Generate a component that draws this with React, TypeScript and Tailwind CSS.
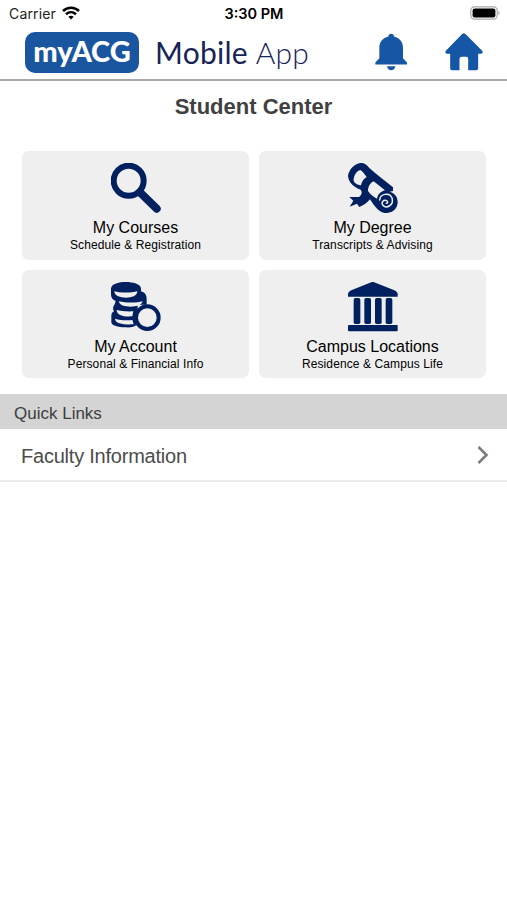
// App.tsx

import React from "react";

const SearchIcon: React.FC = () => (
  <svg viewBox="32 24 150 150" className="h-[50px] w-[50px]" fill="none" stroke="#00205f">
    <circle cx="85" cy="77" r="45" strokeWidth="18" />
    <path d="M119 112L169 161" strokeWidth="24" strokeLinecap="round" />
  </svg>
);

const DegreeIcon: React.FC = () => (
  <svg viewBox="32 24 150 150" className="h-[50px] w-[50px]">
    <path
      d="M32 63C34 46 50 26 70 24C80 23 88 29 96 39L116 56L167 97V108L157 110C175 116 181 127 181 142C180 160 168 173 149 174C131 174 119 163 107 146L98 133C91 142 78 152 66 156L59 146L37 155L48 137L36 126H65C76 117 75 107 67 103C51 96 34 85 32 63Z"
      fill="#00205f"
    />
    <path d="M49 77C48 64 58 46 69 45C76 49 82 59 88 66C79 71 73 80 71 91C62 89 52 86 49 77Z" fill="#efefef" />
    <path d="M92 108C92 95 98 84 109 79L143 106C130 110 122 117 119 131C109 126 99 119 92 108Z" fill="#efefef" />
    <path
      d="M127 135C128 116 157 111 164 129C171 150 147 163 136 150C131 141 139 133 148 137C153 139 151 145 147 145"
      fill="none"
      stroke="#efefef"
      strokeWidth="4.5"
      strokeLinecap="round"
    />
  </svg>
);

const CoinsIcon: React.FC = () => (
  <svg viewBox="32 24 150 150" className="h-[50px] w-[50px]">
    <path
      d="M32 43C34 29 57 24 76 24C98 24 121 30 122 43V52C133 55 139 62 139 74V92H112V150C103 159 91 161 75 160C54 160 33 155 33 145V126C33 119 36 115 41 112C36 105 38 98 43 91L46 81C38 78 32 71 32 62Z"
      fill="#00205f"
    />
    <path d="M42 52C57 57 94 57 111 52C111 66 94 71 77 71C60 71 42 66 42 52Z" fill="#efefef" />
    <path d="M56 82C75 87 109 87 127 82C124 94 108 98 91 98C74 98 56 94 56 82Z" fill="#efefef" />
    <path d="M49 108C60 111 79 113 99 112L96 127C73 129 49 125 49 108Z" fill="#efefef" />
    <path d="M44 134C60 139 78 140 96 138L100 151C73 153 44 149 44 134Z" fill="#efefef" />
    <circle cx="141" cy="131" r="34" fill="#efefef" stroke="#00205f" strokeWidth="12" />
  </svg>
);

const CampusIcon: React.FC = () => (
  <svg viewBox="32 24 150 150" className="h-[50px] w-[50px]" fill="#00205f">
    <path d="M106 23L171 49C177 52 181 55 181 61V68H32V61C32 55 36 52 42 49Z" />
    <rect x="49" y="72" width="20" height="78" rx="5" />
    <rect x="81" y="72" width="20" height="78" rx="5" />
    <rect x="113" y="72" width="20" height="78" rx="5" />
    <rect x="145" y="72" width="20" height="78" rx="5" />
    <rect x="32" y="153" width="149" height="19" rx="3" />
  </svg>
);

const cards = [
  { title: "My Courses", subtitle: "Schedule & Registration", icon: <SearchIcon /> },
  { title: "My Degree", subtitle: "Transcripts & Advising", icon: <DegreeIcon /> },
  { title: "My Account", subtitle: "Personal & Financial Info", icon: <CoinsIcon /> },
  { title: "Campus Locations", subtitle: "Residence & Campus Life", icon: <CampusIcon /> },
];

const StatusBar: React.FC = () => (
  <div className="grid h-7 grid-cols-3 items-center pb-[2px] pl-[9px] pr-[7px] font-['Inter',sans-serif] text-black">
    <div className="flex items-center gap-[6px] text-[14px] tracking-[0.15px]">
      <span className="text-[#222]">Carrier</span>
      <svg viewBox="0 0 18 14" className="h-[14px] w-[18px]" fill="none" stroke="#000" strokeWidth="2.5">
        <path d="M1 5C5.5 .7 12.5 .7 17 5" />
        <path d="M4 8.3C7 5.6 11 5.6 14 8.3" />
        <path d="M6.3 10.8C8 9.3 10 9.3 11.7 10.8L9 13.6Z" fill="#000" stroke="none" />
      </svg>
    </div>
    <span className="-ml-px pt-[2px] text-center text-[14.5px] font-semibold">3:30 PM</span>
    <svg viewBox="0 0 30 14" className="h-[14px] w-[30px] justify-self-end">
      <rect x=".8" y=".8" width="26.4" height="12.4" rx="3.6" fill="#fff" stroke="#aaa" strokeWidth="1.2" />
      <rect x="2.6" y="2.4" width="22.8" height="9.2" rx="2" fill="#000" />
      <path d="M28.4 4.8Q31 7 28.4 9.2Z" fill="#aaa" />
    </svg>
  </div>
);

const Header: React.FC = () => (
  <header className="flex h-[53px] items-start border-b-2 border-[#aaa7a7] pl-[25px] pr-6 pt-[3.5px]">
    <div className="flex h-[41px] w-[114px] items-center justify-center rounded-[10px] bg-[#1a559f] pb-[3px] font-['Lato',sans-serif] text-[29px] font-black leading-none text-white">
      myACG
    </div>
    <div className="ml-4 mt-[2px] whitespace-nowrap font-['Lato',sans-serif] text-[30px] leading-[36px] tracking-[0.25px] text-[#172457]">
      Mobile <span className="font-light">App</span>
    </div>
    <div className="ml-auto flex gap-[38px] pt-[1.5px]">
      <svg viewBox="365 99 96 113" className="h-[38px] w-8" fill="#1557a5">
        <path d="M405 109C405 98 422 98 422 109C439 113 449 126 449 143V174L461 187V193H366V187L378 174V143C378 126 388 113 405 109Z" />
        <path d="M401 198H426C424 214 403 214 401 198Z" />
      </svg>
      <svg viewBox="577 98 113 114" className="h-[38px] w-[38px]" fill="#1557a5">
        <path d="M628 101Q633 96 638 101L688 151Q692 158 686 160H676V204Q676 210 670 210H646V175Q646 169 640 169H627Q620 169 620 175V210H597Q592 210 592 204V160H582Q575 158 579 151Z" />
      </svg>
    </div>
  </header>
);

const App: React.FC = () => {
  return (
    <div className="min-h-screen w-full bg-white font-['Liberation_Sans',Arial,sans-serif]">
      <StatusBar />
      <Header />

      <main>
        <h1 className="pt-[13px] text-center text-[22px] font-bold leading-[26px] text-[#414141]">
          Student Center
        </h1>

        {/* Menu cards */}
        <div className="mt-[31px] grid grid-cols-2 gap-[10px] pl-[22px] pr-[21px]">
          {cards.map((card) => (
            <button
              key={card.title}
              className="flex h-[108.5px] flex-col items-center rounded-[7px] bg-[#efefef] pt-[12px] text-black"
            >
              {card.icon}
              <span className="mt-[5px] text-[16px] leading-[19px]">{card.title}</span>
              <span className="text-[12px] leading-[16px] tracking-[0.1px]">{card.subtitle}</span>
            </button>
          ))}
        </div>

        {/* Quick links */}
        <h2 className="mt-4 flex h-[35px] items-center bg-[#d4d4d4] pl-[14px] pt-[4px] text-[17px] text-[#3d3d3d]">
          Quick Links
        </h2>
        <a className="flex h-[53px] items-center justify-between border-b-2 border-[#ebebeb] pl-[21px] pr-[18px] text-[20px] tracking-[-0.22px] text-[#4c4c4c]">
          <span className="pt-[2px]">Faculty Information</span>
          <svg viewBox="0 0 12 18" className="mt-px h-[18px] w-3" fill="none" stroke="#7d7d7d" strokeWidth="2.6">
            <path d="M1.5 1L9.5 9L1.5 17" />
          </svg>
        </a>
      </main>
    </div>
  );
};

export default App;
